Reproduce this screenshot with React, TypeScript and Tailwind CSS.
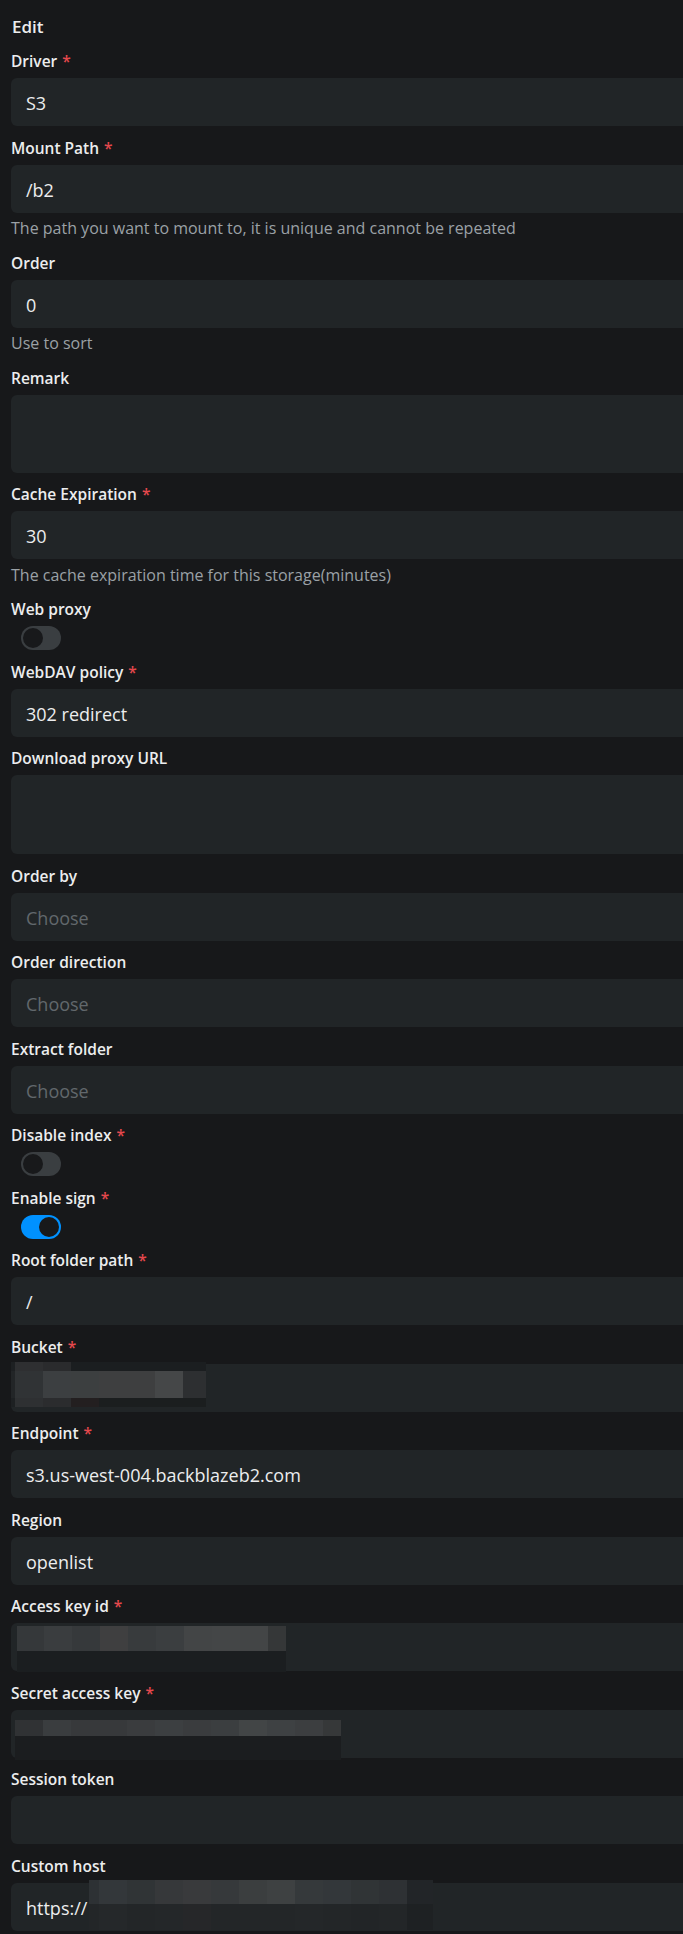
type Row = { h: string; cells: string[] }

type Field =
  | { kind: 'input'; label: string; required?: boolean; value?: string; placeholder?: string; help?: string; mosaic?: 'bucket' | 'access' | 'secret' | 'host' }
  | { kind: 'textarea'; label: string; required?: boolean; h: string }
  | { kind: 'switch'; label: string; required?: boolean; on?: boolean }

// pixelated (redacted) values from the screenshot
const BUCKET: Row[] = [
  { h: 'h-[9px]', cells: ['w-[4px] bg-[#1d2022]', 'w-[28px] bg-[#2e2f31]', 'w-[28px] bg-[#2a2b2d]', 'w-[28px] bg-[#1b1e20]', 'w-[28px] bg-[#1b1e20]', 'w-[28px] bg-[#1b1e20]', 'w-[28px] bg-[#1b1e20]', 'w-[23px] bg-[#1b1e20]'] },
  { h: 'h-[27px]', cells: ['w-[4px] bg-[#222527]', 'w-[28px] bg-[#303335]', 'w-[28px] bg-[#3c3f41]', 'w-[28px] bg-[#3c3f40]', 'w-[28px] bg-[#3e3f40]', 'w-[28px] bg-[#3e3f40]', 'w-[28px] bg-[#454748]', 'w-[23px] bg-[#2d2f31]'] },
  { h: 'h-[9px]', cells: ['w-[4px] bg-[#1d2022]', 'w-[28px] bg-[#2e3032]', 'w-[28px] bg-[#2b2c2e]', 'w-[28px] bg-[#231f20]', 'w-[28px] bg-[#1b1e1f]', 'w-[28px] bg-[#1b1e1f]', 'w-[28px] bg-[#1b1e1f]', 'w-[23px] bg-[#1b1e1f]'] },
]

const ACCESS: Row[] = [
  { h: 'h-[25px]', cells: ['w-[27px] bg-[#35383a]', 'w-[28px] bg-[#3a3d3f]', 'w-[28px] bg-[#36393b]', 'w-[28px] bg-[#3f3f40]', 'w-[28px] bg-[#383b3d]', 'w-[28px] bg-[#3b3e40]', 'w-[28px] bg-[#434546]', 'w-[28px] bg-[#444647]', 'w-[28px] bg-[#434546]', 'w-[18px] bg-[#353738]'] },
  { h: 'h-[21px]', cells: ['w-[269px] bg-[#1b1e20]'] },
]

const SECRET: Row[] = [
  { h: 'h-[16px]', cells: ['w-[28px] bg-[#303234]', 'w-[28px] bg-[#3a3d3f]', 'w-[28px] bg-[#37393b]', 'w-[28px] bg-[#37393b]', 'w-[28px] bg-[#3a3c3e]', 'w-[28px] bg-[#3c3f41]', 'w-[28px] bg-[#3a3c3e]', 'w-[28px] bg-[#3b3e40]', 'w-[28px] bg-[#424546]', 'w-[28px] bg-[#3e4143]', 'w-[28px] bg-[#3c3e40]', 'w-[18px] bg-[#363839]'] },
  { h: 'h-[24px]', cells: ['w-[326px] bg-[#1b1d1f]'] },
]

const HOST: Row[] = [
  { h: 'h-[24px]', cells: ['w-[10px] bg-[#2d3134]', 'w-[28px] bg-[#33373a]', 'w-[28px] bg-[#303436]', 'w-[28px] bg-[#36383a]', 'w-[28px] bg-[#393a3c]', 'w-[28px] bg-[#36393b]', 'w-[28px] bg-[#3b3e3f]', 'w-[28px] bg-[#3e4142]', 'w-[28px] bg-[#35393b]', 'w-[28px] bg-[#33373a]', 'w-[28px] bg-[#303436]', 'w-[28px] bg-[#2e3134]', 'w-[26px] bg-[#222528]'] },
  { h: 'h-[26px]', cells: ['w-[10px] bg-[#232628]', 'w-[28px] bg-[#25282a]', 'w-[28px] bg-[#232628]', 'w-[28px] bg-[#242729]', 'w-[28px] bg-[#262729]', 'w-[28px] bg-[#232628]', 'w-[28px] bg-[#232628]', 'w-[28px] bg-[#232628]', 'w-[28px] bg-[#242729]', 'w-[28px] bg-[#232628]', 'w-[28px] bg-[#222527]', 'w-[28px] bg-[#232628]', 'w-[26px] bg-[#1e2123]'] },
]

const MOSAICS = {
  bucket: { rows: BUCKET, pos: 'left-0 -top-[2px]' },
  access: { rows: ACCESS, pos: 'left-[6px] top-[3px]' },
  secret: { rows: SECRET, pos: 'left-[4px] top-[10px]' },
  host: { rows: HOST, pos: 'left-[78px] -top-[3px]' },
}

const FIELDS: Field[] = [
  { kind: 'input', label: 'Driver', required: true, value: 'S3' },
  { kind: 'input', label: 'Mount Path', required: true, value: '/b2', help: 'The path you want to mount to, it is unique and cannot be repeated' },
  { kind: 'input', label: 'Order', value: '0', help: 'Use to sort' },
  { kind: 'textarea', label: 'Remark', h: 'h-[78px]' },
  { kind: 'input', label: 'Cache Expiration', required: true, value: '30', help: 'The cache expiration time for this storage(minutes)' },
  { kind: 'switch', label: 'Web proxy' },
  { kind: 'input', label: 'WebDAV policy', required: true, value: '302 redirect' },
  { kind: 'textarea', label: 'Download proxy URL', h: 'h-[79px]' },
  { kind: 'input', label: 'Order by', placeholder: 'Choose' },
  { kind: 'input', label: 'Order direction', placeholder: 'Choose' },
  { kind: 'input', label: 'Extract folder', placeholder: 'Choose' },
  { kind: 'switch', label: 'Disable index', required: true },
  { kind: 'switch', label: 'Enable sign', required: true, on: true },
  { kind: 'input', label: 'Root folder path', required: true, value: '/' },
  { kind: 'input', label: 'Bucket', required: true, mosaic: 'bucket' },
  { kind: 'input', label: 'Endpoint', required: true, value: 's3.us-west-004.backblazeb2.com' },
  { kind: 'input', label: 'Region', value: 'openlist' },
  { kind: 'input', label: 'Access key id', required: true, mosaic: 'access' },
  { kind: 'input', label: 'Secret access key', required: true, mosaic: 'secret' },
  { kind: 'input', label: 'Session token' },
  { kind: 'input', label: 'Custom host', value: 'https://', mosaic: 'host' },
]

function Mosaic({ which }: { which: keyof typeof MOSAICS }) {
  const m = MOSAICS[which]
  return (
    <div className={`absolute flex flex-col ${m.pos}`}>
      {m.rows.map((row, i) => (
        <div key={i} className={`flex ${row.h}`}>
          {row.cells.map((c, j) => (
            <div key={j} className={`h-full ${c}`} />
          ))}
        </div>
      ))}
    </div>
  )
}

function Label({ text, required }: { text: string; required?: boolean }) {
  return (
    <div className="mb-[6px] h-[22px] whitespace-nowrap text-[15.5px] font-semibold leading-[22px] text-[#ecedee]">
      {text}
      {required && <span className="ml-[5px] text-[#e5484d]">*</span>}
    </div>
  )
}

function Switch({ on }: { on?: boolean }) {
  return (
    <div
      className={`ml-[10px] flex h-6 w-10 items-center rounded-full p-[2px] ${
        on ? 'justify-end bg-[#0091ff]' : 'justify-start bg-[#3a3e41]'
      }`}
    >
      <div className="h-5 w-5 rounded-full bg-[#18191b]" />
    </div>
  )
}

function FormField({ field }: { field: Field }) {
  return (
    <div className="flex flex-col">
      <Label text={field.label} required={field.required} />
      {field.kind === 'switch' && <Switch on={field.on} />}
      {field.kind === 'textarea' && <div className={`w-[720px] rounded-md bg-[#212527] ${field.h}`} />}
      {field.kind === 'input' && (
        <>
          <div className="relative flex h-12 w-[720px] items-center rounded-md bg-[#212527] pl-[15px] pt-[2px] text-lg text-[#ecedee]">
            {field.value && <span>{field.value}</span>}
            {field.placeholder && <span className="text-[#62686c]">{field.placeholder}</span>}
            {field.mosaic && <Mosaic which={field.mosaic} />}
          </div>
          {field.help && (
            <div className="mt-[3.5px] h-[25px] whitespace-nowrap text-base leading-6 text-[#9ba1a6]">{field.help}</div>
          )}
        </>
      )}
    </div>
  )
}

export default function App() {
  return (
    <div className="min-h-[1934px] w-full overflow-hidden bg-[#17181a] font-['Open_Sans',sans-serif]">
      <div className="flex flex-col gap-[10.5px] pb-1 pl-[11px] pt-[14.5px]">
        <h2 className="h-[25px] pl-px text-[17px] font-semibold leading-6 text-[#ecedee]">Edit</h2>
        {FIELDS.map((f) => (
          <FormField key={f.label} field={f} />
        ))}
      </div>
    </div>
  )
}
